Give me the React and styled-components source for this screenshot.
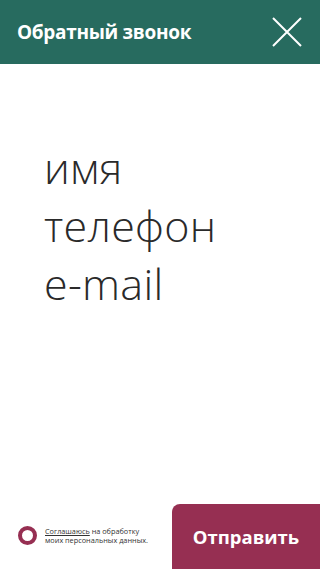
import React from "react";
import styled, { createGlobalStyle } from "styled-components";

const GlobalStyle = createGlobalStyle`
  html, body, #root {
    margin: 0;
    padding: 0;
    height: 100%;
  }
  body {
    background: #fff;
    font-family: "Open Sans", "Noto Sans", sans-serif;
  }
`;

const Page = styled.div`
  display: flex;
  flex-direction: column;
  width: 320px;
  height: 569px;
  overflow: hidden;
`;

const Header = styled.header`
  display: flex;
  align-items: center;
  justify-content: space-between;
  height: 64px;
  padding: 0 18px 0 17px;
  background-color: #276b5f;
  box-sizing: border-box;
`;

const Title = styled.h1`
  margin: 0;
  font-size: 19px;
  font-weight: 700;
  color: #fff;
  letter-spacing: -0.3px;
`;

const CloseButton = styled.button`
  display: flex;
  padding: 0;
  border: 0;
  background: none;
  cursor: pointer;
`;

const Fields = styled.div`
  flex: 1;
  display: flex;
  flex-direction: column;
  padding: 74px 0 0 44px;
`;

const Field = styled.input`
  width: 250px;
  height: 58px;
  padding: 0;
  border: 0;
  outline: none;
  background: transparent;
  font-family: "Open Sans", sans-serif;
  font-size: 43px;
  font-weight: 300;
  letter-spacing: 0.3px;
  color: #2a2a2a;
  &::placeholder {
    color: #2a2a2a;
  }
`;

const Footer = styled.footer`
  display: flex;
  align-items: flex-end;
  justify-content: space-between;
  height: 65px;
`;

const Agree = styled.label`
  display: flex;
  align-items: center;
  gap: 8px;
  padding: 0 0 24px 18px;
`;

const Ring = styled.span`
  width: 11px;
  height: 11px;
  border: 4px solid #962f52;
  border-radius: 50%;
  flex-shrink: 0;
`;

const AgreeText = styled.span`
  font-size: 7.3px;
  line-height: 9px;
  color: #333;
`;

const Link = styled.span`
  text-decoration: underline;
`;

const Submit = styled.button`
  width: 148px;
  height: 65px;
  border: 0;
  border-top-left-radius: 8px;
  background-color: #962f52;
  color: #fff;
  font-family: "Open Sans", sans-serif;
  font-size: 18.5px;
  font-weight: 700;
  cursor: pointer;
`;

export default function App() {
  return (
    <Page>
      <GlobalStyle />
      <Header>
        <Title>Обратный звонок</Title>
        <CloseButton aria-label="Закрыть">
          <svg width="30" height="30" viewBox="0 0 30 30">
            <path d="M1 1L29 29M29 1L1 29" stroke="#fff" strokeWidth="2" />
          </svg>
        </CloseButton>
      </Header>
      <Fields>
        <Field placeholder="имя" />
        <Field placeholder="телефон" />
        <Field placeholder="e-mail" />
      </Fields>
      <Footer>
        <Agree>
          <Ring />
          <AgreeText>
            <Link>Соглашаюсь</Link> на обработку
            <br />
            моих персональных данных.
          </AgreeText>
        </Agree>
        <Submit>Отправить</Submit>
      </Footer>
    </Page>
  );
}
